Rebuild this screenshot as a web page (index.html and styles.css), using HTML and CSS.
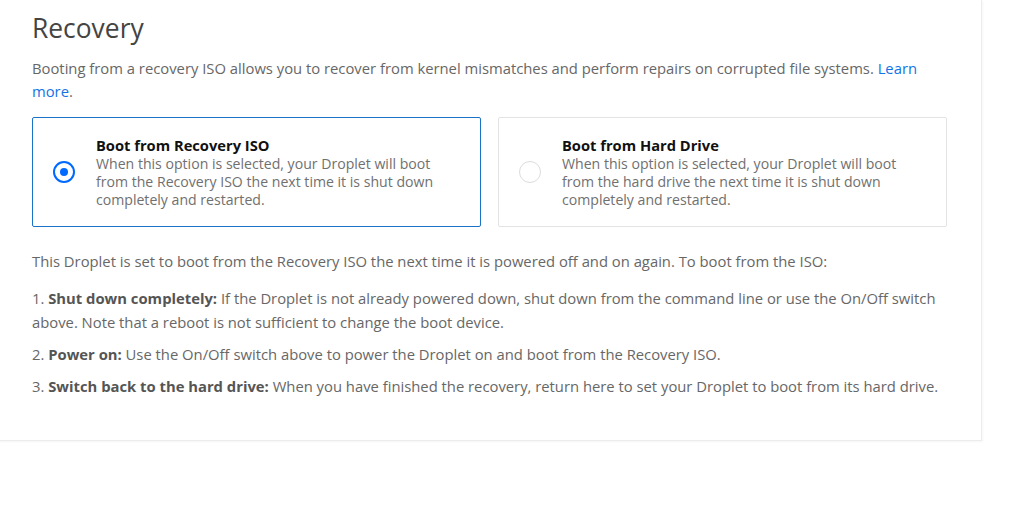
FILE: index.html
```html
<!DOCTYPE html>
<html>
<head>
<meta charset="utf-8">
<link rel="stylesheet" href="styles.css">
</head>
<body>
<div class="panel">
  <h2 class="title">Recovery</h2>
  <p class="intro">Booting from a recovery ISO allows you to recover from kernel mismatches and perform repairs on corrupted file systems. <a href="#" class="link">Learn more</a>.</p>
  <div class="options">
    <div class="option selected">
      <span class="radio"><span class="dot"></span></span>
      <div class="option-text">
        <div class="option-title">Boot from Recovery ISO</div>
        <div class="option-desc">When this option is selected, your Droplet will boot from the Recovery ISO the next time it is shut down completely and restarted.</div>
      </div>
    </div>
    <div class="option">
      <span class="radio"></span>
      <div class="option-text">
        <div class="option-title">Boot from Hard Drive</div>
        <div class="option-desc">When this option is selected, your Droplet will boot from the hard drive the next time it is shut down completely and restarted.</div>
      </div>
    </div>
  </div>
  <p class="status">This Droplet is set to boot from the Recovery ISO the next time it is powered off and on again. To boot from the ISO:</p>
  <p class="step">1. <b>Shut down completely:</b> If the Droplet is not already powered down, shut down from the command line or use the On/Off switch above. Note that a reboot is not sufficient to change the boot device.</p>
  <p class="step">2. <b>Power on:</b> Use the On/Off switch above to power the Droplet on and boot from the Recovery ISO.</p>
  <p class="step">3. <b>Switch back to the hard drive:</b> When you have finished the recovery, return here to set your Droplet to boot from its hard drive.</p>
</div>
</body>
</html>
```
FILE: styles.css
```css
html, body {
  margin: 0;
  padding: 0;
  background: #fff;
}
body {
  font-family: "Open Sans", "Liberation Sans", sans-serif;
  color: #676767;
  width: 1024px;
  height: 508px;
  overflow: hidden;
}
.panel {
  width: 915px;
  margin-left: -2px;
  padding: 9px 34px 42px 33px;
  border: 1px solid #ececec;
  border-top: none;
  box-shadow: 1px 1px 2px rgba(0,0,0,0.04);
}
.title {
  margin: 0;
  font-size: 26.4px;
  font-weight: 400;
  line-height: 38px;
  color: #444;
}
.intro {
  margin: 10px 0 0;
  font-size: 14.8px;
  line-height: 23px;
  width: 905px;
}
.link {
  color: #1473e6;
  text-decoration: none;
}
.options {
  display: flex;
  gap: 17px;
  margin-top: 14px;
}
.option {
  flex: 1;
  display: flex;
  align-items: center;
  height: 110px;
  box-sizing: border-box;
  border: 1px solid #e3e3e3;
  border-radius: 2px;
  padding: 0 20px;
}
.option.selected {
  border-color: #1a73c8;
}
.radio {
  width: 20px;
  height: 20px;
  border-radius: 50%;
  border: 1px solid #dcdcdc;
  flex: none;
  display: flex;
  align-items: center;
  justify-content: center;
  margin-right: 21px;
}
.option.selected .radio {
  border: 2px solid #0069ff;
  width: 18px;
  height: 18px;
}
.dot {
  width: 8px;
  height: 8px;
  border-radius: 50%;
  background: #0069ff;
}
.option-text {
  max-width: 352px;
}
.option-title {
  font-weight: 700;
  color: #111;
  font-size: 14.7px;
  line-height: 20px;
}
.option-desc {
  font-size: 14.1px;
  line-height: 18px;
  color: #707070;
}
.status {
  margin: 22px 0 0;
  font-size: 14.8px;
  line-height: 24px;
}
.step {
  margin: 13px 0 0;
  font-size: 14.8px;
  line-height: 24px;
}
.step + .step {
  margin-top: 8px;
}
.step b {
  color: #555;
  font-weight: 700;
}
```
